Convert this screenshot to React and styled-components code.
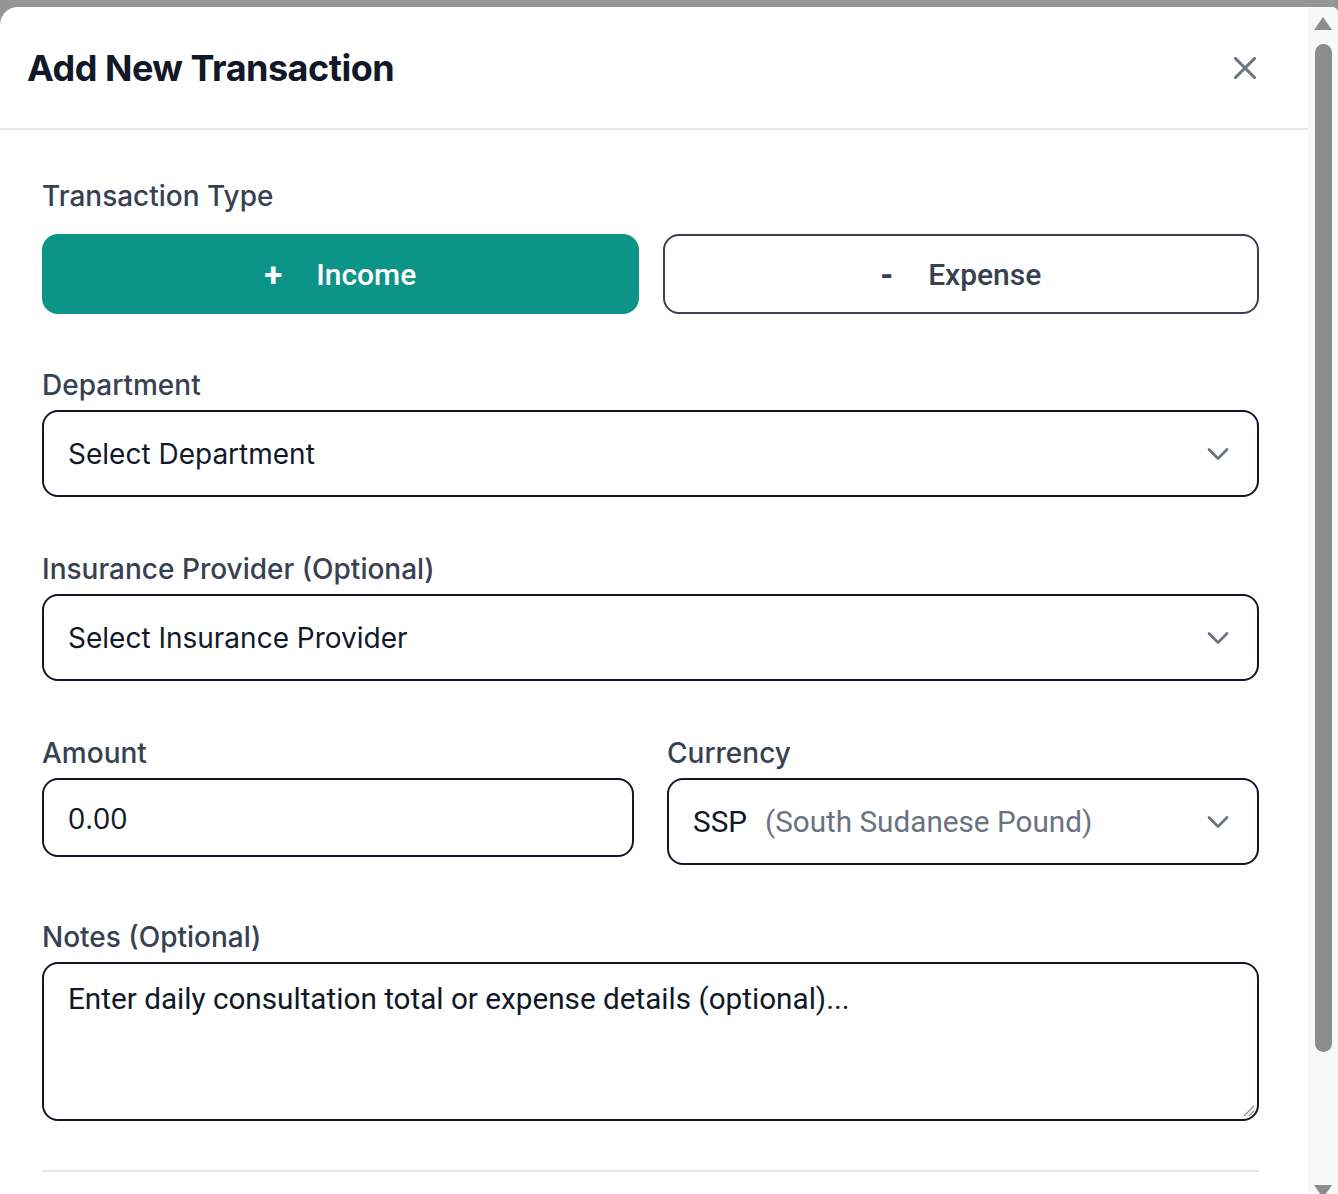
import styled, { createGlobalStyle } from "styled-components";

const GlobalStyle = createGlobalStyle`
  html, body {
    margin: 0;
    padding: 0;
    background: #959595;
  }
  * {
    box-sizing: border-box;
  }
`;

const Backdrop = styled.div`
  height: 1194px;
  padding-top: 7px;
  overflow: hidden;
  background: #959595;
`;

const Modal = styled.div`
  display: flex;
  height: 1187px;
  background: #ffffff;
  border-top-left-radius: 18px;
  border-top-right-radius: 6px;
  overflow: hidden;
`;

const Main = styled.div`
  flex: 1;
  min-width: 0;
  display: flex;
  flex-direction: column;
`;

const Header = styled.header`
  height: 123px;
  display: flex;
  align-items: center;
  justify-content: space-between;
  padding: 0 44px 0 27px;
  border-bottom: 2px solid #e5e7eb;
`;

const Title = styled.h2`
  margin: 0;
  font-family: Inter, "Liberation Sans", sans-serif;
  font-size: 36px;
  font-weight: 650;
  color: #111827;
  letter-spacing: -0.5px;
`;

const CloseButton = styled.button`
  border: none;
  background: transparent;
  padding: 0;
  display: flex;
  color: #6b7280;
  cursor: pointer;
`;

const Body = styled.div`
  padding: 48px 49px 0 42px;
  display: flex;
  flex-direction: column;
`;

const Field = styled.div`
  display: flex;
  flex-direction: column;
  margin-bottom: ${(p) => p.$gap ?? 54}px;
  min-width: 0;
`;

const Label = styled.label`
  display: block;
  font-family: Inter, "Liberation Sans", sans-serif;
  font-size: 28px;
  line-height: 37px;
  font-weight: 500;
  color: #374151;
  margin-bottom: ${(p) => p.$space ?? 6}px;
`;

const TypeRow = styled.div`
  display: grid;
  grid-template-columns: 1fr 1fr;
  gap: 24px;
`;

const TypeButton = styled.button`
  height: 80px;
  border-radius: 16px;
  display: flex;
  align-items: center;
  justify-content: center;
  font-family: Roboto, "Liberation Sans", sans-serif;
  font-size: 30px;
  font-weight: 500;
  cursor: pointer;
  background: ${(p) => (p.$active ? "#0d9488" : "#ffffff")};
  color: ${(p) => (p.$active ? "#ffffff" : "#374151")};
  border: 2px solid ${(p) => (p.$active ? "#0d9488" : "#374151")};
`;

const Sign = styled.span`
  font-size: 33px;
  font-weight: 700;
  margin-right: ${(p) => p.$space}px;
`;

const Control = styled.div`
  height: ${(p) => p.$h ?? 87}px;
  border: 2px solid #111827;
  border-radius: 16px;
  display: flex;
  align-items: center;
  padding: 0 21px 0 24px;
  background: #ffffff;
`;

const ControlText = styled.span`
  flex: 1;
  font-family: ${(p) => p.$font ?? "Inter, 'Liberation Sans', sans-serif"};
  font-size: ${(p) => p.$size ?? 28}px;
  color: #111827;
  white-space: nowrap;
`;

const Muted = styled.span`
  color: #6b7280;
  margin-left: 18px;
`;

const Chevron = styled.svg`
  color: #6b7280;
  flex-shrink: 0;
`;

const Columns = styled.div`
  display: grid;
  grid-template-columns: 1fr 1fr;
  gap: 33px;
  align-items: start;
  margin-bottom: 54px;
`;

const TextArea = styled.div`
  height: 159px;
  border: 2px solid #111827;
  border-radius: 16px;
  padding: 15px 24px;
  font-family: Roboto, "Liberation Sans", sans-serif;
  font-size: 29.7px;
  line-height: 40px;
  color: #111827;
  display: flex;
  flex-direction: column;
`;

const Grip = styled.svg`
  align-self: flex-end;
  margin-top: auto;
  margin-right: -22px;
  margin-bottom: -13px;
`;

const Divider = styled.hr`
  margin: 49px 0 0;
  border: none;
  border-top: 2px solid #e5e7eb;
`;

const Rail = styled.div`
  width: 30px;
  flex-shrink: 0;
  background: #f8f8f8;
  display: flex;
  flex-direction: column;
  align-items: center;
  padding-top: 10px;
`;

const Thumb = styled.div`
  width: 17px;
  height: 1008px;
  margin-top: 14px;
  border-radius: 9px;
  background: #8c8c8c;
`;

const DownArrow = styled.svg`
  margin-top: auto;
  margin-bottom: -4px;
`;

function ChevronDown() {
  return (
    <Chevron width="36" height="36" viewBox="0 0 24 24" fill="none" stroke="currentColor" strokeWidth="1.8" strokeLinecap="round" strokeLinejoin="round">
      <path d="m6 9 6 6 6-6" />
    </Chevron>
  );
}

export default function App() {
  return (
    <>
      <GlobalStyle />
      <Backdrop>
        <Modal>
          <Main>
            <Header>
              <Title>Add New Transaction</Title>
              <CloseButton aria-label="Close">
                <svg width="38" height="38" viewBox="0 0 24 24" fill="none" stroke="currentColor" strokeWidth="2" strokeLinecap="round">
                  <path d="M18 6 6 18M6 6l12 12" />
                </svg>
              </CloseButton>
            </Header>

            <Body>
              <Field $gap={53}>
                <Label $space={19}>Transaction Type</Label>
                <TypeRow>
                  <TypeButton $active>
                    <Sign $space={34}>+</Sign>
                    Income
                  </TypeButton>
                  <TypeButton>
                    <Sign $space={35}>-</Sign>
                    Expense
                  </TypeButton>
                </TypeRow>
              </Field>

              <Field>
                <Label>Department</Label>
                <Control>
                  <ControlText>Select Department</ControlText>
                  <ChevronDown />
                </Control>
              </Field>

              <Field>
                <Label>Insurance Provider (Optional)</Label>
                <Control>
                  <ControlText>Select Insurance Provider</ControlText>
                  <ChevronDown />
                </Control>
              </Field>

              <Columns>
                <Field $gap={0}>
                  <Label>Amount</Label>
                  <Control $h={79}>
                    <ControlText $font="'Open Sans', 'Liberation Sans', sans-serif" $size={30}>
                      0.00
                    </ControlText>
                  </Control>
                </Field>
                <Field $gap={0}>
                  <Label>Currency</Label>
                  <Control>
                    <ControlText $font="Roboto, 'Liberation Sans', sans-serif" $size={29.7}>
                      SSP<Muted>(South Sudanese Pound)</Muted>
                    </ControlText>
                    <ChevronDown />
                  </Control>
                </Field>
              </Columns>

              <Field $gap={0}>
                <Label>Notes (Optional)</Label>
                <TextArea>
                  Enter daily consultation total or expense details (optional)...
                  <Grip width="14" height="14" viewBox="0 0 14 14" stroke="#8a8a8a" strokeWidth="1.2">
                    <path d="M13 3 3 13M13 8 8 13" />
                  </Grip>
                </TextArea>
              </Field>

              <Divider />
            </Body>
          </Main>

          <Rail>
            <svg width="18" height="13" viewBox="0 0 18 13">
              <path d="M9 0 18 13H0Z" fill="#8c8c8c" />
            </svg>
            <Thumb />
            <DownArrow width="18" height="13" viewBox="0 0 18 13">
              <path d="M0 0h18L9 13Z" fill="#8c8c8c" />
            </DownArrow>
          </Rail>
        </Modal>
      </Backdrop>
    </>
  );
}
